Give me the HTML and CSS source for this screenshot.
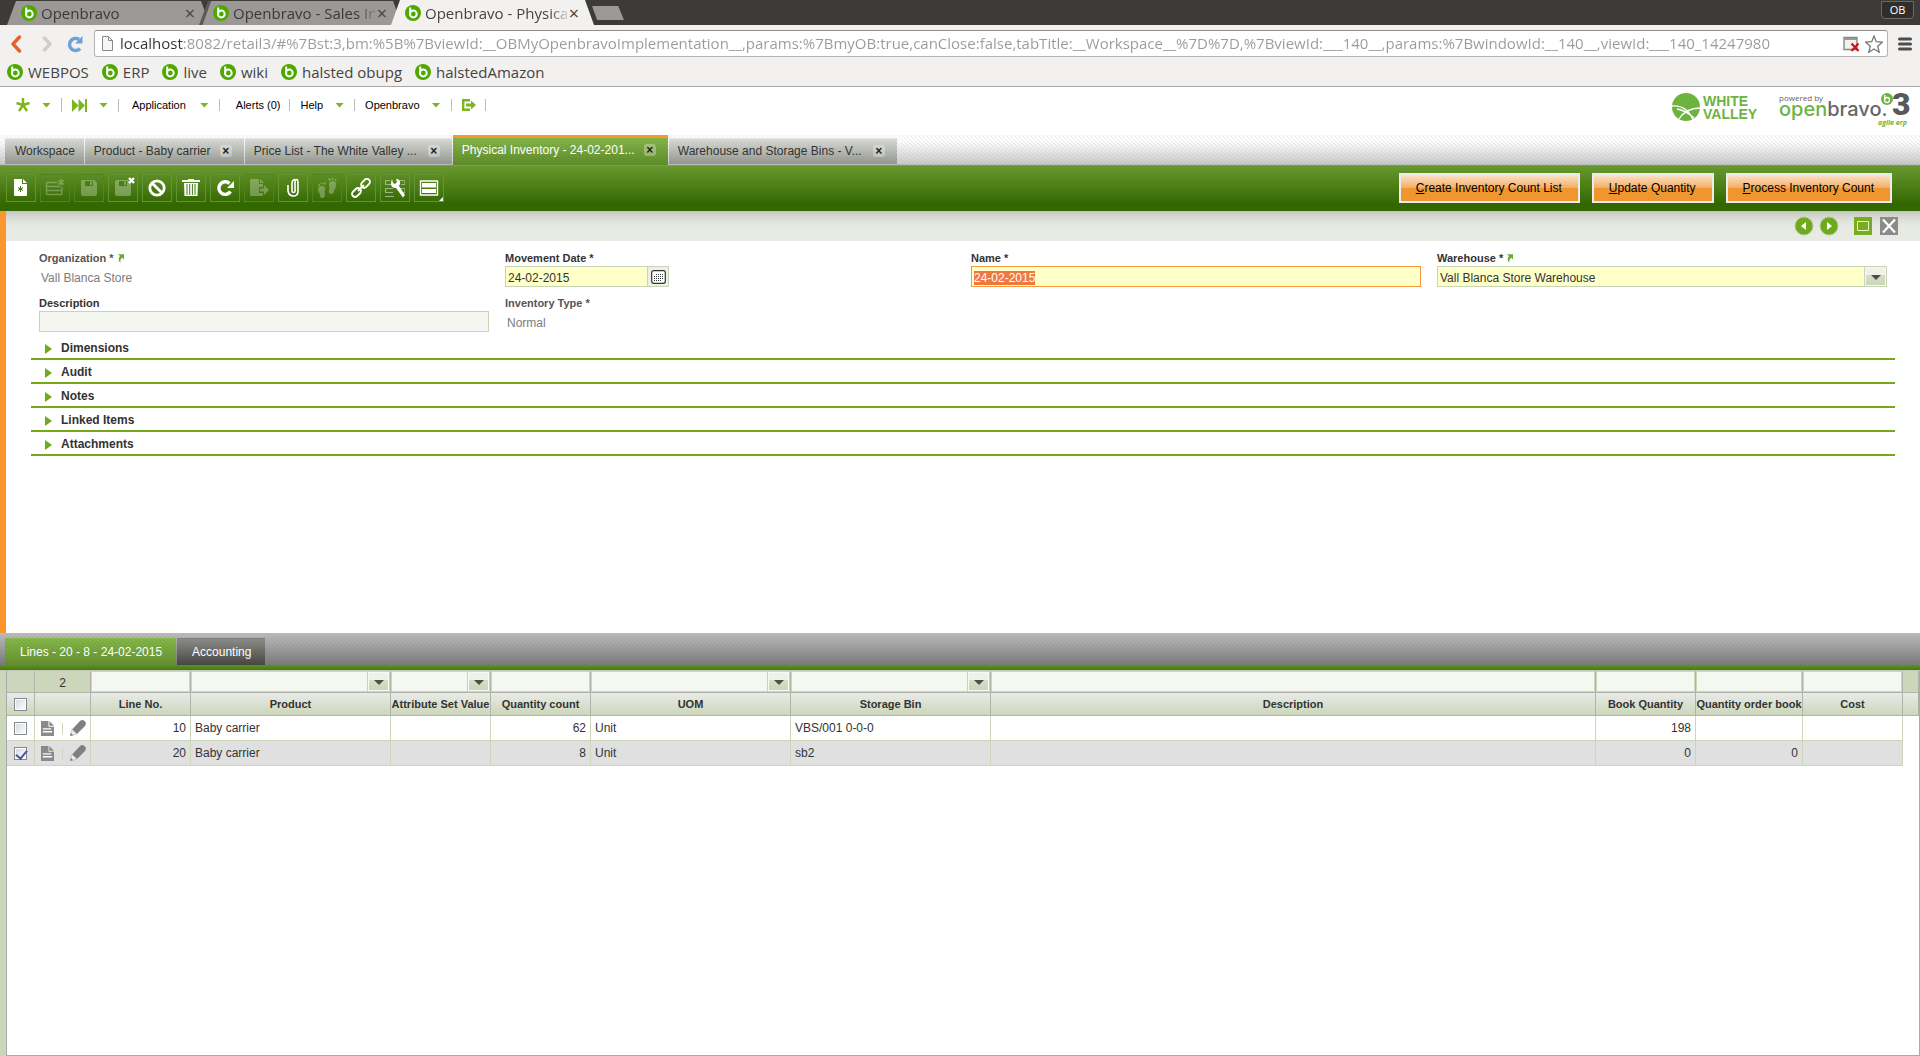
FILE: index.html
```html
<!DOCTYPE html>
<html lang="en">
<head>
<meta charset="utf-8">
<title>Openbravo - Physical Inventory</title>
<link rel="stylesheet" href="styles.css">
</head>
<body>
<svg class="sprite" aria-hidden="true">
  <symbol id="ob" viewBox="0 0 16 16">
    <circle cx="8" cy="8" r="8" fill="#4fa800"/>
    <circle cx="8.300" cy="9" r="3.400" fill="none" stroke="#fff" stroke-width="2"/>
    <path d="M5.200 2.500v6.500" stroke="#fff" stroke-width="2"/>
  </symbol>
  <symbol id="floppy" viewBox="0 0 20 20">
    <path d="M2 4q0-2 2-2h11l3 3v11q0 2-2 2H4q-2 0-2-2z"/>
    <path d="M6 3h8v5H6z" fill="#3f7412"/><path d="M11 3.500h2v3.500h-2z"/>
  </symbol>
  <symbol id="doc" viewBox="0 0 14 16">
    <path d="M0 0h8v6h6v10H0z" fill="#8a8a8a"/><path d="M9 0l5 5H9z" fill="#8a8a8a"/>
    <path d="M2 8.500h9M2 11.500h10" stroke="#fff" stroke-width="1.400"/>
  </symbol>
  <symbol id="pencil" viewBox="0 0 16 16">
    <path d="M10 1q1-1 2.500-1 3 .5 3.500 3.500L15 6l-8 8-5-4.500z" fill="#808080"/>
    <path d="M2 9.500L7 14l-6 2-1-.5z" fill="#eee" stroke="#aaa" stroke-width=".6"/>
    <path d="M0 16l1-3 2 2z" fill="#777"/>
  </symbol>
  <symbol id="link-arrow" viewBox="0 0 8 10">
    <path d="M1 0h7v6L6 4Q3 6 4 10 0 6 3.500 2z" fill="#6cab33"/>
  </symbol>
</svg>

<header class="browser">
  <div class="tabstrip">
    <div class="btab"><svg class="fav"><use href="#ob"/></svg><span class="btitle">Openbravo</span><button class="bclose" aria-label="Close tab">×</button></div>
    <div class="btab"><svg class="fav"><use href="#ob"/></svg><span class="btitle">Openbravo - Sales In</span><button class="bclose" aria-label="Close tab">×</button></div>
    <div class="btab current"><svg class="fav"><use href="#ob"/></svg><span class="btitle">Openbravo - Physica</span><button class="bclose" aria-label="Close tab">×</button></div>
    <button class="newtab" aria-label="New tab"></button>
    <span class="profile">OB</span>
  </div>
  <div class="navbar">
    <button class="nav" aria-label="Back"><svg width="12" height="18" viewBox="0 0 12 18"><path d="M9.500 2L3 9l6.500 7" fill="none" stroke="#e2632c" stroke-width="3.400" stroke-linecap="round" stroke-linejoin="round"/></svg></button>
    <button class="nav forward" aria-label="Forward"><svg width="12" height="18" viewBox="0 0 12 18"><path d="M2.500 2L9 9l-6.500 7" fill="none" stroke="#cfcecc" stroke-width="3.400" stroke-linejoin="round"/></svg></button>
    <button class="nav" aria-label="Reload"><svg width="18" height="18" viewBox="0 0 18 18"><path d="M14 13.500A6 6 0 1 1 13 4.500" fill="none" stroke="#6ba2d8" stroke-width="3.600"/><path d="M16.500 1v7.500H9z" fill="#6ba2d8"/></svg></button>
    <div class="urlbox">
      <svg width="11" height="15" viewBox="0 0 11 15"><path d="M.5.500h6l4 4v10H.5zM6.500.500v4h4" fill="#f6f6f6" stroke="#888"/></svg>
      <input class="url" type="text" aria-label="Address" value="localhost:8082/retail3/#%7Bst:3,bm:%5B%7BviewId:__OBMyOpenbravoImplementation__,params:%7BmyOB:true,canClose:false,tabTitle:__Workspace__%7D%7D,%7BviewId:___140__,params:%7BwindowId:__140__,viewId:___140_14247980">
      <svg width="17" height="16" viewBox="0 0 17 16"><path d="M1 1.500h13v12H1z" fill="#f2f2f2" stroke="#888" stroke-width="1.400"/><path d="M1 2h13v2H1z" fill="#999"/><path d="M8.500 7.500l7 7.500M15.500 7.500l-7 7.500" stroke="#c4161c" stroke-width="2.200"/></svg>
      <svg width="18" height="18" viewBox="0 0 18 18"><path d="M9 1l2.300 5.700 6 .5-4.600 4 1.500 6L9 14l-5.200 3.200 1.500-6-4.600-4 6-.5z" fill="#fff" stroke="#777" stroke-width="1.300"/></svg>
    </div>
    <button class="nav" aria-label="Menu"><svg width="14" height="14" viewBox="0 0 14 14"><path d="M1.500 2h11M1.500 7h11M1.500 12h11" stroke="#4d4d4d" stroke-width="3" stroke-linecap="round"/></svg></button>
  </div>
  <nav class="bookmarks">
    <a href="#"><svg class="fav"><use href="#ob"/></svg>WEBPOS</a>
    <a href="#"><svg class="fav"><use href="#ob"/></svg>ERP</a>
    <a href="#"><svg class="fav"><use href="#ob"/></svg>live</a>
    <a href="#"><svg class="fav"><use href="#ob"/></svg>wiki</a>
    <a href="#"><svg class="fav"><use href="#ob"/></svg>halsted obupg</a>
    <a href="#"><svg class="fav"><use href="#ob"/></svg>halstedAmazon</a>
  </nav>
</header>

<div class="apphead">
  <div class="topline">
    <nav class="menu">
      <button class="star" aria-label="Quick create"><svg width="14" height="14" viewBox="0 0 14 14"><path d="M7 7V0M7 7l6.500-2M7 7l4 6M7 7l-4 6M7 7L.5 5" stroke="#7db51e" stroke-width="2.400"/></svg><i class="tri"></i></button>
      <button class="launch" aria-label="Quick launch"><svg width="15" height="13" viewBox="0 0 15 13"><path d="M0 0l6.500 6.500L0 13zM6.500 0L13 6.500 6.500 13zM13 0h2v13h-2z" fill="#7db51e"/></svg><i class="tri"></i></button>
      <button class="app">Application<i class="tri"></i></button>
      <button class="alerts">Alerts (0)</button>
      <button>Help<i class="tri"></i></button>
      <button>Openbravo<i class="tri"></i></button>
      <button aria-label="Log out"><svg width="14" height="12" viewBox="0 0 14 12"><path d="M8 1.200H1.200v9.600H8" fill="none" stroke="#7db51e" stroke-width="2.400"/><path d="M4 4.500h5V1.500L14 6 9 10.500v-3H4z" fill="#7db51e"/></svg></button>
    </nav>
    <div class="logos">
      <svg width="86" height="30" viewBox="0 0 86 30" role="img" aria-label="White Valley">
        <circle cx="14" cy="15" r="14" fill="#6db33f"/>
        <path d="M0 14q15-1 21 14M7 27q7-11 21-11M5 17q10 2 17 9" fill="none" stroke="#fff" stroke-width="1.300"/>
        <text x="31" y="14" class="wv">WHITE</text><text x="31" y="27" class="wv">VALLEY</text>
      </svg>
      <svg class="oblogo" width="132" height="36" viewBox="0 0 132 36" role="img" aria-label="Powered by Openbravo 3">
        <text x="0" y="9" class="pow">powered by</text>
        <text x="0" y="24" class="word"><tspan fill="#6db33f">open</tspan><tspan fill="#666">bravo.</tspan></text>
        <circle cx="108" cy="7" r="6" fill="#6db33f"/><circle cx="108" cy="8" r="2.500" fill="none" stroke="#fff" stroke-width="1.300"/><path d="M105.800 3v5" stroke="#fff" stroke-width="1.300"/>
        <text x="113" y="23" class="three">3</text>
        <text x="99" y="33" class="agile">agile erp</text>
      </svg>
    </div>
  </div>
  <nav class="apptabs">
    <button class="atab">Workspace</button>
    <button class="atab">Product - Baby carrier<span class="x">×</span></button>
    <button class="atab">Price List - The White Valley ...<span class="x">×</span></button>
    <button class="atab on">Physical Inventory - 24-02-201...<span class="x">×</span></button>
    <button class="atab">Warehouse and Storage Bins - V...<span class="x">×</span></button>
  </nav>
</div>

<div class="toolbar">
  <div class="tools">
    <button class="tool" aria-label="New"><svg viewBox="0 0 20 20"><path d="M3 1h8v5h5v11q0 1-1 1H4q-1 0-1-1z"/><path d="M12 1l4 4h-4z"/><path d="M9.500 8v6M7 9.500l5 3M12 9.500l-5 3" stroke="#3f7412" stroke-width="1"/></svg></button>
    <button class="tool off" aria-label="New in grid" disabled><svg viewBox="0 0 20 20"><path d="M12 4.500H2.500q-1 0-1 1v10q0 1 1 1H16q1 0 1-1V9M2 8.500h13M2 12.500h15" fill="none" stroke="#fff" stroke-width="1.400"/><path d="M16 1v7M13 2.500l6 4M19 2.500l-6 4" stroke="#fff" stroke-width="1.300"/></svg></button>
    <button class="tool off" aria-label="Save" disabled><svg viewBox="0 0 20 20"><use href="#floppy"/></svg></button>
    <button class="tool" aria-label="Save and close"><svg viewBox="0 0 20 20"><use href="#floppy" opacity=".3"/></svg><svg class="mark" viewBox="0 0 7 7"><path d="M1 1l5 5M6 1L1 6" stroke="#fff" stroke-width="2.400"/></svg></button>
    <button class="tool" aria-label="Undo"><svg viewBox="0 0 20 20"><circle cx="10" cy="10" r="7.200" fill="none" stroke="#fff" stroke-width="2.800"/><path d="M5 5l10 10" stroke="#fff" stroke-width="2.800"/></svg></button>
    <button class="tool" aria-label="Delete"><svg viewBox="0 0 20 20"><path d="M1 2h6V1h6v1h6v2H1z"/><path d="M3 5h14l-.5 13h-13z"/><path d="M6 6v11M8.700 6v11M11.400 6v11M14 6v11" stroke="#44781a" stroke-width="1"/></svg></button>
    <button class="tool" aria-label="Refresh"><svg viewBox="0 0 20 20"><path d="M15.500 13.500A6.300 6.300 0 1 1 14.500 5.500" fill="none" stroke="#fff" stroke-width="3.400"/><path d="M19 3v7h-7z"/></svg></button>
    <button class="tool off" aria-label="Export" disabled><svg viewBox="0 0 20 20"><path d="M2 1h8v5h4v3h-4v6h4v3H2q-1 0-1-1V2q0-1 1-1z"/><path d="M11 1l4 4h-4z"/><path d="M11 10.500h4V7l5 5-5 5v-3.500h-4z"/></svg></button>
    <button class="tool" aria-label="Attach"><svg viewBox="0 0 20 20"><path d="M9 6v7q0 1.500 1.500 1.500T12 13V5q0-3.500 1.500-3.500T15 5v8q0 5-4.500 5T5 13V7" fill="none" stroke="#fff" stroke-width="1.600"/><path d="M9 6q0-4.500 3-4.500" fill="none" stroke="#fff" stroke-width="1.600"/></svg></button>
    <button class="tool off" aria-label="Audit trail" disabled><svg viewBox="0 0 20 20"><path d="M1 11q1-4 5-3 3 1 2 4-1 2 0 4 0 4-3 4-3-1-2-4-2-2-2-5z"/><path d="M12 7q0-4 4-4 4 1 3 5-1 3-2 5 0 3-3 3-3-1-2-4 1-2 0-5z"/><circle cx="2" cy="7" r="1"/><circle cx="4.500" cy="5.500" r="1"/><circle cx="7.500" cy="5.500" r="1.200"/><circle cx="12.500" cy="1.500" r="1.200"/><circle cx="15.500" cy="1" r="1"/><circle cx="18.500" cy="2" r="1"/></svg></button>
    <button class="tool" aria-label="Link"><svg viewBox="0 0 20 20"><g fill="none" stroke="#fff" stroke-width="1.900"><rect x="-4.500" y="-2.800" width="10" height="6" rx="3" transform="translate(14 5.500) rotate(-45)"/><rect x="-5" y="-3" width="10" height="6" rx="3" transform="translate(5.500 14.500) rotate(-45)"/><path d="M7 13l6-6"/></g></svg></button>
    <button class="tool" aria-label="Process"><svg viewBox="0 0 20 20"><path d="M0 2.500h5M0 6.500h6M0 10.500h8M0 14.500h8M0 18.500h9M.5 2v5M.5 10v5M15 2.500h5v4h-4M15 10.500h5v4h-3" fill="none" stroke="#9db982" stroke-width="1.200"/><path d="M7 1l1 4 2 1 2-2-1-3q5 0 4 5l-1 2 6 9-2 2.500L11 10q-5 0-5-4 0-3 1-5z"/></svg></button>
    <button class="tool" aria-label="View"><svg viewBox="0 0 20 20"><path d="M1.500 3h17v14h-17z" fill="none" stroke="#fff" stroke-width="1.400"/><path d="M3 5h14v4.500H3zM3 11h14v4H3z"/></svg><i class="corner"></i></button>
  </div>
  <div class="actions">
    <button class="act"><u>C</u>reate Inventory Count List</button>
    <button class="act"><u>U</u>pdate Quantity</button>
    <button class="act"><u>P</u>rocess Inventory Count</button>
  </div>
</div>

<main class="formpane">
  <div class="statusbar">
    <button aria-label="Previous"><svg width="20" height="20" viewBox="0 0 20 20"><circle cx="10" cy="10" r="9" fill="#6fa91c" stroke="#b5c99a"/><path d="M12 6v8l-5-4z" fill="#fff"/></svg></button>
    <button aria-label="Next"><svg width="20" height="20" viewBox="0 0 20 20"><circle cx="10" cy="10" r="9" fill="#6fa91c" stroke="#b5c99a"/><path d="M8 6v8l5-4z" fill="#fff"/></svg></button>
    <button class="max" aria-label="Maximize"><svg width="18" height="18" viewBox="0 0 18 18"><path d="M0 0h18v18H0z" fill="#78ad1e"/><path d="M3.500 4.500h11v9h-11z" fill="none" stroke="#e8f2d4"/></svg></button>
    <button aria-label="Close"><svg width="18" height="18" viewBox="0 0 18 18"><path d="M0 0h18v18H0z" fill="#8b8b8b"/><path d="M3 2.500l12 13M15 2.500l-12 13" stroke="#fff" stroke-width="2.200"/></svg></button>
  </div>
  <form class="form">
    <div class="field ro"><span class="label">Organization * <svg class="go"><use href="#link-arrow"/></svg></span><span class="value">Vall Blanca Store</span></div>
    <div class="field"><label for="date">Movement Date *</label>
      <div class="date"><input id="date" class="box need" type="text" value="24-02-2015"><button type="button" class="cal" aria-label="Pick date"><svg width="15" height="14" viewBox="0 0 15 14"><rect x=".7" y=".7" width="13.600" height="12.600" rx="2" fill="#fff" stroke="#333" stroke-width="1.200"/><path d="M5 4.500h8M3 6.500h10M3 8.500h10M3 10.500h8" stroke="#333" stroke-dasharray="1 1"/></svg></button></div></div>
    <div class="field"><label for="name">Name *</label><input id="name" class="box need focus" type="text" value="24-02-2015"></div>
    <div class="field"><label for="wh">Warehouse * <svg class="go"><use href="#link-arrow"/></svg></label>
      <div class="combo"><select id="wh" class="box need"><option>Vall Blanca Store Warehouse</option></select></div></div>
    <div class="field"><label for="desc">Description</label><input id="desc" class="box" type="text"></div>
    <div class="field ro"><span class="label">Inventory Type *</span><span class="value">Normal</span></div>
  </form>
  <div class="sections">
    <button>Dimensions</button>
    <button>Audit</button>
    <button>Notes</button>
    <button>Linked Items</button>
    <button>Attachments</button>
  </div>
</main>

<section class="lower">
  <nav class="subtabs">
    <button class="stab on">Lines - 20 - 8 - 24-02-2015</button>
    <button class="stab">Accounting</button>
  </nav>
  <div class="gridwrap">
    <table class="grid">
      <colgroup><col class="c-check"><col class="c-edit"><col class="c-s"><col class="c-m"><col class="c-s"><col class="c-s"><col class="c-m"><col class="c-m"><col><col class="c-s"><col class="c-q"><col class="c-s"><col class="c-end"></colgroup>
      <thead>
        <tr class="filters">
          <td></td><td class="count">2</td>
          <td><input aria-label="Filter line no."></td>
          <td><div class="combo"><select aria-label="Filter product"><option></option></select></div></td>
          <td><div class="combo"><select aria-label="Filter attribute set value"><option></option></select></div></td>
          <td><input aria-label="Filter quantity count"></td>
          <td><div class="combo"><select aria-label="Filter UOM"><option></option></select></div></td>
          <td><div class="combo"><select aria-label="Filter storage bin"><option></option></select></div></td>
          <td><input aria-label="Filter description"></td>
          <td><input aria-label="Filter book quantity"></td>
          <td><input aria-label="Filter quantity order book"></td>
          <td><input aria-label="Filter cost"></td><td class="end"></td>
        </tr>
        <tr class="heads">
          <th><input type="checkbox" aria-label="Select all"></th><th></th><th>Line No.</th><th>Product</th><th>Attribute Set Value</th><th>Quantity count</th><th>UOM</th><th>Storage Bin</th><th>Description</th><th>Book Quantity</th><th>Quantity order book</th><th>Cost</th><th></th>
        </tr>
      </thead>
      <tbody>
        <tr><td class="c"><input type="checkbox" aria-label="Select line 10"></td><td><div class="edit"><svg class="i-doc"><use href="#doc"/></svg><i></i><svg class="i-pen"><use href="#pencil"/></svg></div></td><td class="n">10</td><td>Baby carrier</td><td></td><td class="n">62</td><td>Unit</td><td>VBS/001 0-0-0</td><td></td><td class="n">198</td><td></td><td></td><td class="end"></td></tr>
        <tr class="sel"><td class="c"><input type="checkbox" aria-label="Select line 20" checked></td><td><div class="edit"><svg class="i-doc"><use href="#doc"/></svg><i></i><svg class="i-pen"><use href="#pencil"/></svg></div></td><td class="n">20</td><td>Baby carrier</td><td></td><td class="n">8</td><td>Unit</td><td>sb2</td><td></td><td class="n">0</td><td class="n">0</td><td></td><td class="end"></td></tr>
      </tbody>
    </table>
  </div>
</section>
<script src="app.js"></script>
</body>
</html>
```
FILE: app.js
```js
// Put the cursor in the Name field with its text selected
var nameField = document.getElementById('name');
nameField.focus();
nameField.select();
```
FILE: styles.css
```css
* { box-sizing: border-box; }
:root {
  --hatch: linear-gradient(45deg, rgba(0,0,0,.05) 25%, transparent 25% 50%, rgba(0,0,0,.05) 50% 75%, transparent 75%) 0 0 / 4px 4px;
}
body {
  margin: 0;
  min-height: 100vh;
  display: flex;
  flex-direction: column;
  background: #fff;
  color: #333;
  font: 12px/16px "Liberation Sans", Arial, sans-serif;
}
button, input, select { font: inherit; color: inherit; margin: 0; border-radius: 0; outline: 0; }
button { border: 0; padding: 0; background: none; }
svg { display: block; flex: none; }
.sprite { position: absolute; width: 0; height: 0; }

/* Browser frame */
.browser { font: 15px/20px "Open Sans", "Noto Sans", sans-serif; background: #f2f1f0; border-bottom: 1px solid #a9a8a6; }
.fav { width: 16px; height: 16px; }
.tabstrip { display: flex; height: 25px; padding-left: 7px; background: #3c3b37; }
.btab {
  display: flex; align-items: center; width: 203px; height: 24px; margin: 1px -11px 0 0; padding-left: 14px;
  background: #9b9996; color: #3a3935;
  clip-path: polygon(9px 0, calc(100% - 9px) 0, 100% 100%, 0 100%);
}
.btab + .btab { background: linear-gradient(110deg, #5c5a56 11px, #9b9996 12px); }
.btab.current { position: relative; height: 25px; margin-top: 0; padding-top: 1px; background: #f2f1f0; color: #444; }
.btitle { width: 142px; margin-left: 4px; overflow: hidden; white-space: nowrap; mask-image: linear-gradient(90deg, #000 88%, rgba(0,0,0,.2)); }
.bclose { width: 14px; font-size: 18px; line-height: 20px; color: #444; }
.newtab { width: 32px; height: 14px; margin: 6px 0 0 9px; background: #9b9996; clip-path: polygon(0 0, 82% 0, 100% 100%, 16% 100%); }
.profile {
  width: 33px; height: 18px; margin: 1px 6px 0 auto; border: 1px solid #6b6963; border-radius: 0 0 4px 4px;
  background: #2f2e2b; color: #fff; font-size: 11px; line-height: 16px; text-align: center;
}
.navbar { display: flex; align-items: center; padding: 5px 8px 1px 10px; }
.nav { display: flex; margin-right: 19px; }
.nav.forward { margin-right: 13px; }
.nav:nth-child(3) { margin-right: 10px; }
.nav:last-child { margin: 0 0 0 10px; }
.urlbox {
  flex: 1; min-width: 0; height: 27px; display: flex; align-items: center; gap: 5px; padding: 0 4px 0 7px;
  background: #fff; border: 1px solid #b5b4b2; border-top-color: #8f8e8c; border-radius: 3px;
}
.url {
  flex: 1; min-width: 0; height: 25px; margin-left: 2px; padding: 0 0 2px; border: 0;
  color: #9a9a9a; -webkit-text-fill-color: transparent;
  background: linear-gradient(90deg, #333 63px, #9a9a9a 63px); background-clip: text; -webkit-background-clip: text;
}
.bookmarks { display: flex; gap: 13px; height: 28px; align-items: center; padding: 0 0 1px 7px; }
.bookmarks a { display: flex; align-items: center; gap: 5px; color: #444; text-decoration: none; }

/* Application header */
.apphead { background: var(--hatch), linear-gradient(#fff 70%, #c9cac9); }
.topline { display: flex; justify-content: space-between; height: 48px; padding: 5px 9px 0 0; background: #fff; }
.menu { display: flex; align-items: center; height: 26px; font-size: 11px; color: #000; }
.menu button { display: flex; align-items: center; padding: 0 9px 0 10px; line-height: 12px; border-right: 1px solid #bbb; }
.menu button.star { padding-left: 16px; }
.tri { width: 9px; height: 5px; margin: 0 1px 0 12px; background: #7db51e; clip-path: polygon(0 0, 100% 0, 50% 100%); }
.menu .app { padding-left: 13px; }
.menu .app .tri { margin-left: 14px; }
.menu .alerts { padding-left: 16px; }
.logos { display: flex; gap: 21px; }
.oblogo { overflow: visible; }
.wv { font: bold 14px "Liberation Sans", sans-serif; fill: #6db33f; }
.pow { font: 8px "Open Sans", sans-serif; fill: #666; }
.word { font: 500 20px Inter, sans-serif; }
.three { font: 900 32px Roboto, sans-serif; fill: #58595b; }
.agile { font: italic bold 7px "Open Sans", sans-serif; fill: #6db33f; }
.apptabs { display: flex; align-items: flex-end; gap: 1px; height: 30px; padding-left: 5px; border-bottom: 1px solid #bbb; }
.atab {
  display: flex; align-items: center; height: 26px; padding: 0 9px 2px 10px; white-space: nowrap;
  background: linear-gradient(#d6d9d3, #93968f); border-top: 1px solid #e8e9e7;
}
.atab:has(.x) { padding: 0 12px 2px 9px; justify-content: space-between; }
.atab:nth-child(2) { width: 159px; }
.atab:nth-child(3) { width: 207px; }
.atab:nth-child(4) { width: 215px; }
.atab:nth-child(5) { width: 228px; }
.apptabs .atab.on {
  height: 30px; margin-bottom: -1px; padding-bottom: 3px; border-top: 3px solid #fb952e; color: #fff;
  background: var(--hatch), linear-gradient(#86b74a, #5f8d2b);
}
.x { width: 12px; height: 12px; border-radius: 3px; background: rgba(255,255,255,.3); color: #222; font: bold 12px/12px "Liberation Sans", sans-serif; text-align: center; }

.toolbar {
  display: flex; align-items: center; justify-content: space-between; height: 46px; padding: 0 28px 1px 6px;
  border-top: 1px solid #76a822; background: linear-gradient(#68992f, #336700 85%);
}
.tools { display: flex; gap: 4px; }
.tool { position: relative; width: 30px; height: 28px; border: 1px solid #649431; display: grid; place-items: center; }
.tool svg { width: 20px; height: 20px; fill: #fff; }
.tool.off { border-color: #4f8420; }
.tool.off svg { opacity: .28; }
.tool .mark { position: absolute; top: 2px; right: 2px; width: 7px; height: 7px; }
.corner { position: absolute; right: 0; bottom: 0; width: 4px; height: 4px; background: #fff; clip-path: polygon(100% 0, 100% 100%, 0 100%); }
.actions { display: flex; gap: 12px; }
.act {
  height: 30px; padding: 0 16px 0 15px; border: 2px solid #ececec; color: #000; white-space: nowrap;
  background: linear-gradient(#fbe3cb, #f3ad62 50%, #ef962f 51%);
}

/* Header record form */
.formpane { flex: 1 1 0; border-left: 6px solid #fb952e; }
.statusbar {
  display: flex; justify-content: flex-end; align-items: center; gap: 5px; height: 30px; padding-right: 22px;
  background: linear-gradient(transparent, #e8ebe3 70%), var(--hatch), linear-gradient(#c6cac3, #e8ebe3 50%);
}
.statusbar .max { margin: 0 3px 0 10px; }
.form { display: grid; grid-template-columns: repeat(4, 1fr); gap: 8px 16px; padding: 9px 33px 4px; }
.field { height: 37px; min-width: 0; }
.field label, .field .label { display: flex; align-items: center; height: 16px; font-size: 11px; font-weight: bold; white-space: pre; }
.ro .label { color: #555; }
.value { display: block; padding: 4px 2px 0; color: #7c7c7c; }
.go { width: 7px; height: 9px; }
.box { display: block; width: 100%; height: 21px; padding: 2px 2px 0; border: 1px solid #c8d4b8; background: #f4f7f0; color: #333; }
.need { background: #ffffc8; }
.focus { border-color: #f89838; }
.focus::selection { background: #f07840; color: #fff; }
.date { display: flex; width: 164px; }
.cal { flex: none; width: 21px; display: grid; place-items: center; border: 1px solid #c8d4b8; border-left-width: 0; background: #eef0e6; }
.combo { position: relative; }
.combo select { appearance: none; }
.combo::before {
  content: ""; position: absolute; top: 1px; right: 1px; width: 19px; bottom: 1px; pointer-events: none;
  border: 1px solid #f7f9f3; box-shadow: -1px 0 #c8d4b8; background: linear-gradient(#f0f2ea 40%, #d6dec7 41%, #ccd6ba);
}
.combo::after {
  content: ""; position: absolute; top: 9px; right: 6px; width: 10px; height: 5px; pointer-events: none;
  background: #4c4f46; clip-path: polygon(0 0, 100% 0, 50% 100%);
}
.sections { display: flex; flex-direction: column; padding: 0 25px; }
.sections button {
  display: flex; align-items: center; height: 24px; padding: 2px 0 0 14px; gap: 9px;
  border-bottom: 2px solid #76a819; font-weight: bold;
}
.sections button::before { content: ""; width: 7px; height: 10px; margin-top: 2px; background: #6fab14; clip-path: polygon(0 0, 100% 50%, 0 100%); }

/* Child tabs and line grid */
.lower { flex: 1 1 1px; display: flex; flex-direction: column; }
.subtabs {
  display: flex; align-items: flex-end; gap: 1px; height: 32px; padding-left: 5px; color: #fff;
  background: var(--hatch), linear-gradient(#bfbfbf, #7c7c7c);
}
.stab { height: 27px; padding: 0 14px 0 15px; background: linear-gradient(#8b8b88, #454542); border-top: 1px solid #7a7a78; }
.stab.on { border-top-color: #86b74a; background: var(--hatch), linear-gradient(#86b74a, #639230); }
.gridwrap { flex: 1; border: solid #aaa; border-width: 0 1px 1px; margin-left: 6px; box-shadow: -6px 0 #ccd6ba; }
.gridwrap::before { content: ""; display: block; height: 6px; margin: 0 -1px 0 -7px; background: linear-gradient(#609020, #487a0c 5px, #c4cabb 5px); }
.grid { width: 100%; table-layout: fixed; border-collapse: separate; border-spacing: 0; }
.c-check { width: 28px; } .c-edit { width: 56px; } .c-s { width: 100px; } .c-m { width: 200px; } .c-q { width: 107px; } .c-end { width: 16px; }
.grid td, .grid th { padding: 0; border: solid #ccd6ba; border-width: 0 1px 1px 0; white-space: nowrap; }
.filters td { height: 22px; background: #ccd6ba; border-color: #b0b4aa; }
.filters .count { padding-top: 2px; text-align: center; }
.filters input, .filters select { display: block; width: 100%; height: 21px; padding: 0 2px; border: 1px solid #ccd6ba; background: #f5f8f0; }
.grid .heads th { height: 23px; border-color: #b0b4aa; background: linear-gradient(#e9ebe8, #ccd6ba); font-size: 11px; overflow: hidden; }
.grid tbody td { height: 25px; padding: 0 4px; }
.grid tbody .n { text-align: right; }
.grid tbody .c { padding: 0; text-align: center; }
.grid .sel td { background: #e0e0e0; }
.grid tbody .end { border: 0; background: #fff; }
.grid input[type="checkbox"] {
  appearance: none; display: block; width: 13px; height: 13px; margin: 0 auto;
  border: 1px solid #85898e; background: linear-gradient(135deg, #d4d7da, #fff); box-shadow: inset 0 0 0 1px #fff;
}
.grid input[type="checkbox"]:checked::before { content: ""; display: block; width: 5px; height: 9px; margin: 0 0 0 3px; border: solid #40589c; border-width: 0 2px 2px 0; transform: rotate(40deg); }
.edit { display: flex; align-items: center; justify-content: space-between; padding: 0 0 0 2px; }
.edit i { width: 1px; height: 11px; background: #ccd6ba; }
.i-doc { width: 13px; height: 15px; }
.i-pen { width: 16px; height: 16px; }
```
